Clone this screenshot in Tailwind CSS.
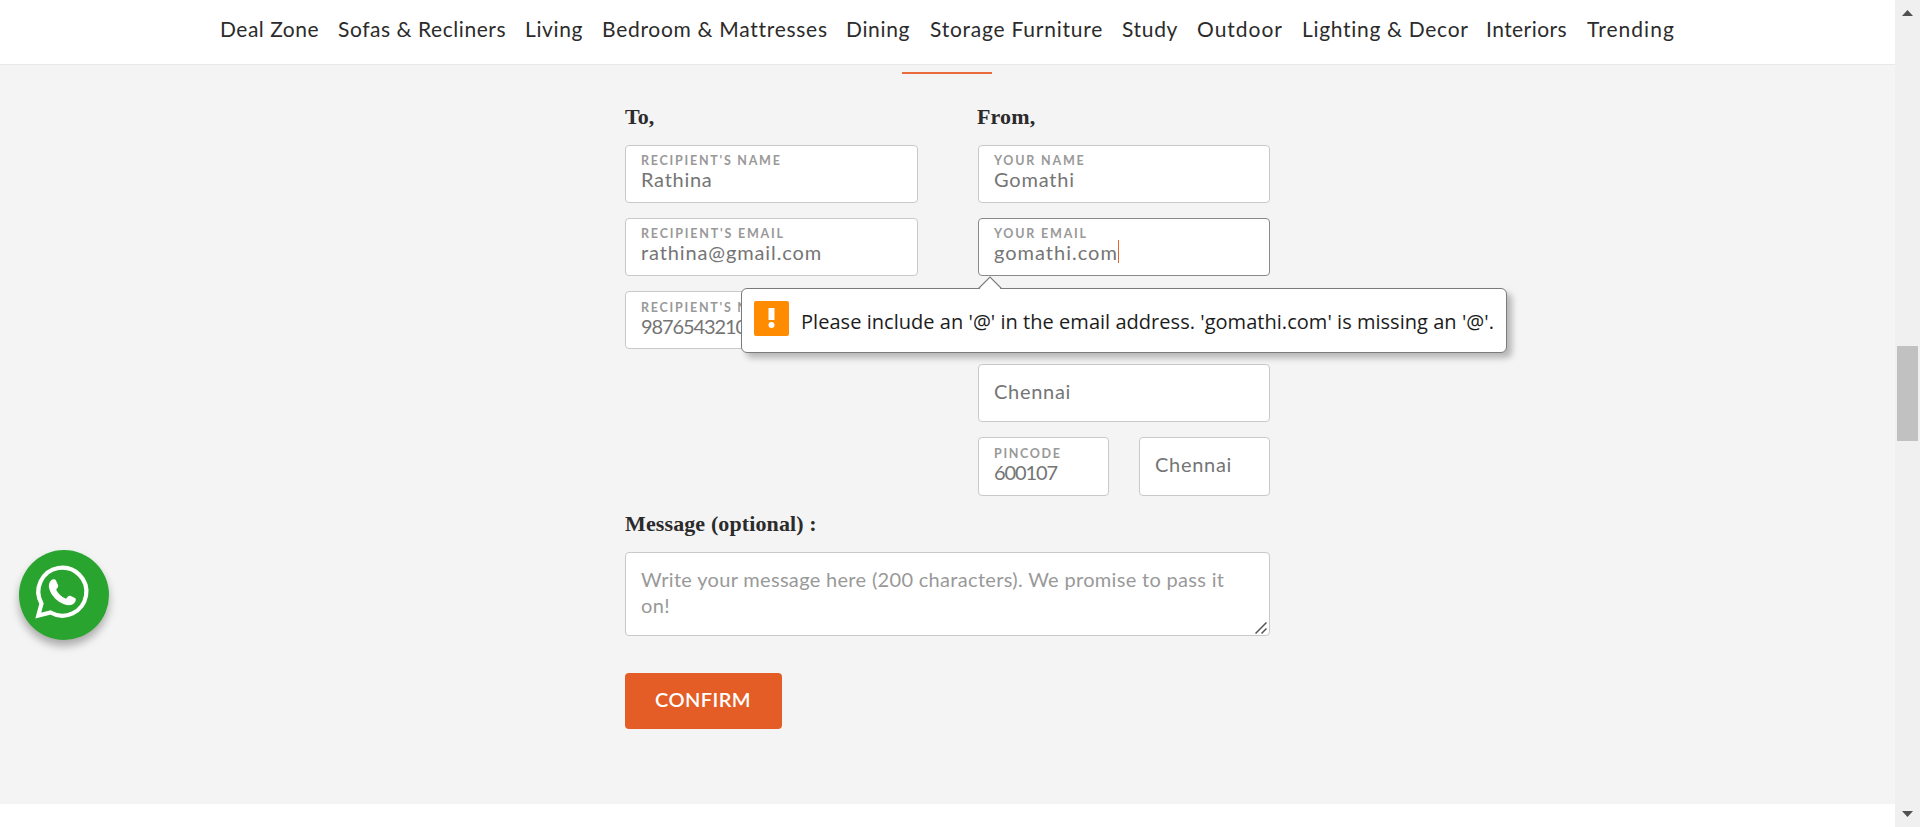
<!DOCTYPE html>
<html lang="en">
<head>
<meta charset="utf-8">
<title>Gift card details</title>
<script src="https://cdn.jsdelivr.net/npm/@tailwindcss/browser@4"></script>
</head>
<body class="flex h-[827px] w-[1920px] overflow-hidden bg-white font-['Lato',sans-serif] text-[#2b2b2b]">
<div class="flex h-full w-[1895px] flex-col">
  <nav class="flex h-[65px] shrink-0 border-b border-[#e9e9e9] bg-white pt-[16px] pl-[220px] text-[21px] leading-[26px] whitespace-nowrap">
    <a class="w-[118px] shrink-0 tracking-[0.5px]">Deal Zone</a>
    <a class="w-[187px] shrink-0 tracking-[0.56px]">Sofas &amp; Recliners</a>
    <a class="w-[77px] shrink-0 tracking-[0.62px]">Living</a>
    <a class="w-[244px] shrink-0 tracking-[0.71px]">Bedroom &amp; Mattresses</a>
    <a class="w-[84px] shrink-0 tracking-[0.65px]">Dining</a>
    <a class="w-[192px] shrink-0 tracking-[0.76px]">Storage Furniture</a>
    <a class="w-[75px] shrink-0 tracking-[0.66px]">Study</a>
    <a class="w-[105px] shrink-0 tracking-[0.98px]">Outdoor</a>
    <a class="w-[184px] shrink-0 tracking-[0.69px]">Lighting &amp; Decor</a>
    <a class="w-[101px] shrink-0 tracking-[0.44px]">Interiors</a>
    <a class="shrink-0 tracking-[1.05px]">Trending</a>
  </nav>

  <main class="flex h-[739px] shrink-0 flex-col bg-[#f4f4f4] pt-[7px]">
    <div class="ml-[902px] h-[2px] w-[90px] bg-[#ea6b3c]"></div>
    <form class="mt-[29px] ml-[625px] flex w-[645px] flex-col text-[20px] leading-6 text-[#757575]">
      <div class="flex justify-between">
        <div class="flex w-[293px] flex-col gap-[15px]">
          <h3 class="h-[27px] font-['Liberation_Serif',serif] text-[22px] leading-7 font-bold text-[#2b2b2b]">To,</h3>
          <div class="h-[58px] rounded border border-[#c9c9c9] bg-white px-[15px] pt-[7px]">
            <div class="text-[12.5px] leading-4 font-bold tracking-[1.75px] text-[#999]">RECIPIENT'S NAME</div>
            <div class="-mt-[2px] tracking-[0.73px]">Rathina</div>
          </div>
          <div class="h-[58px] rounded border border-[#c9c9c9] bg-white px-[15px] pt-[7px]">
            <div class="text-[12.5px] leading-4 font-bold tracking-[1.8px] text-[#999]">RECIPIENT'S EMAIL</div>
            <div class="-mt-[2px] tracking-[0.88px]">rathina@gmail.com</div>
          </div>
          <div class="h-[58px] rounded border border-[#c9c9c9] bg-white px-[15px] pt-[8px]">
            <div class="text-[12.5px] leading-4 font-bold tracking-[1.75px] text-[#999]">RECIPIENT'S NUMBER</div>
            <div class="-mt-[2px] tracking-[-1.1px]">9876543210</div>
          </div>
        </div>

        <div class="flex w-[292px] flex-col gap-[15px]">
          <h3 class="-ml-px h-[27px] font-['Liberation_Serif',serif] text-[22px] leading-7 font-bold tracking-[0.15px] text-[#2b2b2b]">From,</h3>
          <div class="h-[58px] rounded border border-[#c9c9c9] bg-white px-[15px] pt-[7px]">
            <div class="text-[12.5px] leading-4 font-bold tracking-[1.8px] text-[#999]">YOUR NAME</div>
            <div class="-mt-[2px] tracking-[0.82px]">Gomathi</div>
          </div>
          <div class="relative z-10 h-[58px] rounded border border-[#8a8a8a] bg-white px-[15px] pt-[7px]">
            <div class="text-[12.5px] leading-4 font-bold tracking-[1.8px] text-[#999]">YOUR EMAIL</div>
            <div class="-mt-[2px] flex tracking-[1px]">gomathi.com<span class="h-[23px] w-px bg-[#e8622c]"></span></div>

            <!-- Validation bubble -->
            <div class="absolute top-[69px] left-[-238px] flex h-[65px] w-[766px] rounded-[6px] border border-[#7b7b7b] bg-white pt-[12px] pl-[12px] shadow-[5px_5px_6px_rgba(0,0,0,0.25)]">
              <svg class="absolute top-[-13px] left-[235px]" width="26" height="14" viewBox="0 0 26 14"><path d="M1.5 14 L13 1.2 L24.5 14" fill="#fff"/><path d="M1.5 12.5 L13 1 L24.5 12.5" fill="none" stroke="#7b7b7b" stroke-width="1.1"/></svg>
              <svg class="shrink-0" width="35" height="35" viewBox="0 0 35 35"><rect width="35" height="35" rx="2" fill="#ff8c00"/><path d="M14.5 7h6v12h-6z" fill="#fff"/><circle cx="17.5" cy="24" r="3" fill="#fff"/></svg>
              <p class="mt-[7px] ml-[12px] font-['Open_Sans',sans-serif] text-[20px] leading-7 tracking-[0.035px] whitespace-nowrap text-[#1c1c1c]">Please include an '@' in the email address. 'gomathi.com' is missing an '@'.</p>
            </div>
          </div>
          <div class="h-[58px] rounded border border-[#c9c9c9] bg-white"></div>
          <div class="h-[58px] rounded border border-[#c9c9c9] bg-white px-[15px] pt-[14px] tracking-[0.7px]">Chennai</div>
          <div class="flex justify-between">
            <div class="h-[59px] w-[131px] rounded border border-[#c9c9c9] bg-white px-[15px] pt-[8px]">
              <div class="text-[12.5px] leading-4 font-bold tracking-[1.65px] text-[#999]">PINCODE</div>
              <div class="-mt-[2px] tracking-[-1.1px]">600107</div>
            </div>
            <div class="h-[59px] w-[131px] rounded border border-[#c9c9c9] bg-white px-[15px] pt-[14px] tracking-[0.7px]">Chennai</div>
          </div>
        </div>
      </div>

      <h3 class="mt-[14px] h-[27px] font-['Liberation_Serif',serif] text-[22px] leading-7 font-bold tracking-[0.12px] text-[#2b2b2b]">Message (optional) :</h3>
      <div class="relative mt-[15px] h-[84px] rounded border border-[#c9c9c9] bg-white px-[15px] pt-[13px] leading-[26px] tracking-[0.32px] whitespace-nowrap text-[#999]">
        Write your message here (200 characters). We promise to pass it<br>on!
        <svg class="absolute right-[2px] bottom-px" width="12" height="12" viewBox="0 0 12 12" fill="none" stroke="#555" stroke-width="1.5"><path d="M.5 11.5 L11.5 .5 M6.5 11.5 L11.5 6.5"/></svg>
      </div>
      <button type="button" class="mt-[37px] flex h-[56px] w-[157px] items-center justify-center rounded bg-[#e55d26] pr-px pb-[4px] text-[20px] font-semibold tracking-[0.45px] text-white">CONFIRM</button>
    </form>
  </main>
</div>

<!-- Scrollbar -->
<aside class="flex h-full w-[25px] flex-col items-center bg-[#f0f0f0]">
  <svg class="mt-[10px] shrink-0" width="11" height="6" viewBox="0 0 11 6"><path d="M5.5 0 11 6H0z" fill="#505050"/></svg>
  <div class="mt-[330px] mr-[1px] h-[95px] w-[21px] shrink-0 bg-[#c1c1c1]"></div>
  <svg class="mt-auto mb-[10px] shrink-0" width="11" height="6" viewBox="0 0 11 6"><path d="M5.5 6 11 0H0z" fill="#505050"/></svg>
</aside>

<!-- Floating chat button -->
<div class="fixed top-[550px] left-[19px] size-[90px] rounded-full bg-[#29a52f] shadow-[0_6px_8px_rgba(0,0,0,0.3)]">
  <svg width="90" height="90" viewBox="0 0 90 90">
    <path d="M22.5 53.500 A24 24 0 1 1 31.500 62.500 L19.300 65.500 Z" fill="none" stroke="#fff" stroke-width="4.200" stroke-linejoin="miter"/>
    <path d="M32 30.500c1.500-1.700 4.200-1.600 5.100.2l2 4.600c.5 1.200-.2 2.300-2 4.200 2.300 4.600 5.600 7.600 10 9.300 1.800-2.600 2.800-3.600 4.200-3l4.700 2.200c1.300.6.900 2.800 0 4.300-2.300 3.300-6.600 3.600-11 1.900C38 51.600 32.500 45.800 30.300 39c-1-3.400-.3-6.600 1.700-8.500z" fill="#fff"/>
  </svg>
</div>
</body>
</html>
